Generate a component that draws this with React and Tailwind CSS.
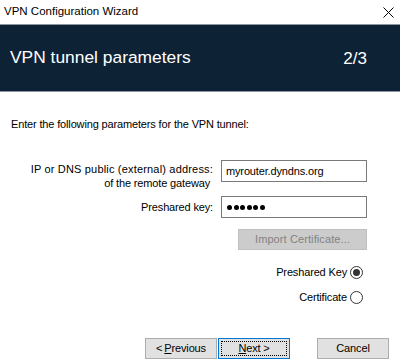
import React, { useState } from "react";

function Radio({ checked }) {
  return (
    <span className="w-[13px] h-[13px] rounded-full border border-[#333333] bg-white flex items-center justify-center">
      {checked && <span className="w-[7px] h-[7px] rounded-full bg-[#333333]" />}
    </span>
  );
}

function Button({ children, focused, className = "" }) {
  return (
    <button
      className={`h-[21px] w-[72px] bg-[#e1e1e1] border flex items-center justify-center text-[11px] leading-none text-black ${
        focused ? "border-[#0078d7] p-[2px]" : "border-[#adadad]"
      } ${className}`}
    >
      {focused ? (
        <span className="w-full h-full border border-dotted border-black flex items-center justify-center">
          {children}
        </span>
      ) : (
        children
      )}
    </button>
  );
}

export default function App() {
  const [auth, setAuth] = useState("psk");

  return (
    <div className="w-[400px] h-[362px] bg-white overflow-hidden flex flex-col font-['Liberation_Sans',Arial,sans-serif] text-black">
      {/* Title bar */}
      <div className="h-[24px] flex items-center justify-between pl-[4px] pr-[5px]">
        <span className="text-[11.5px] leading-none">VPN Configuration Wizard</span>
        <svg width="11" height="11" viewBox="0 0 11 11" className="mr-[1px]">
          <path d="M0.5 0.5 L10.5 10.5 M10.5 0.5 L0.5 10.5" stroke="#000" strokeWidth="1" fill="none" />
        </svg>
      </div>

      {/* Header */}
      <div className="h-[68px] bg-[#0e2236] border-t border-b border-[#8d96a0] flex items-center justify-between pl-[10px] pr-[33px]">
        <span className="text-[17.4px] text-white leading-none">VPN tunnel parameters</span>
        <span className="text-[17px] text-white leading-none">2/3</span>
      </div>

      {/* Body */}
      <div className="flex-1 flex flex-col text-[11px] tracking-[-0.15px]">
        <p className="mt-[26px] ml-[11px] leading-[13px]">
          Enter the following parameters for the VPN tunnel:
        </p>

        <div className="mt-[29px] flex justify-end items-start pr-[33px]">
          <div className="text-right leading-[14px] mt-[2px]">
            <div className="tracking-[0.18px]">IP or DNS public (external) address:</div>
            <div className="pr-[3px]">of the remote gateway</div>
          </div>
          <div className="ml-[8px] w-[146px] h-[22px] border border-[#7a7a7a] flex items-center pl-[4px]">
            myrouter.dyndns.org
          </div>
        </div>

        <div className="mt-[6px] flex justify-end items-center pr-[33px]">
          <span>Preshared key:</span>
          <div className="ml-[8px] w-[146px] h-[22px] border border-[#7a7a7a] flex items-center gap-[1.6px] pl-[5px]">
            {[0, 1, 2, 3, 4, 5].map((i) => (
              <span key={i} className="w-[5px] h-[5px] rounded-full bg-black" />
            ))}
          </div>
        </div>

        <div className="mt-[11px] flex justify-end pr-[33px]">
          <button
            disabled
            className="w-[129px] h-[21px] bg-[#cccccc] border border-[#bfbfbf] text-[#838383] text-[11px] leading-none tracking-[0.1px]"
          >
            Import Certificate...
          </button>
        </div>

        <label
          className="mt-[16px] flex justify-end items-center gap-[3px] pr-[37px] h-[13px] cursor-pointer"
          onClick={() => setAuth("psk")}
        >
          <span>Preshared Key</span>
          <Radio checked={auth === "psk"} />
        </label>

        <label
          className="mt-[12px] flex justify-end items-center gap-[3px] pr-[37px] h-[13px] cursor-pointer"
          onClick={() => setAuth("cert")}
        >
          <span>Certificate</span>
          <Radio checked={auth === "cert"} />
        </label>

        <div className="mt-[34px] flex justify-end pr-[11px]">
          <Button>
            &lt; <span className="underline ml-[2px]">P</span>revious
          </Button>
          <Button focused className="ml-[1px]">
            <span className="underline">N</span>ext &gt;
          </Button>
          <Button className="ml-[27px]">Cancel</Button>
        </div>
      </div>
    </div>
  );
}
